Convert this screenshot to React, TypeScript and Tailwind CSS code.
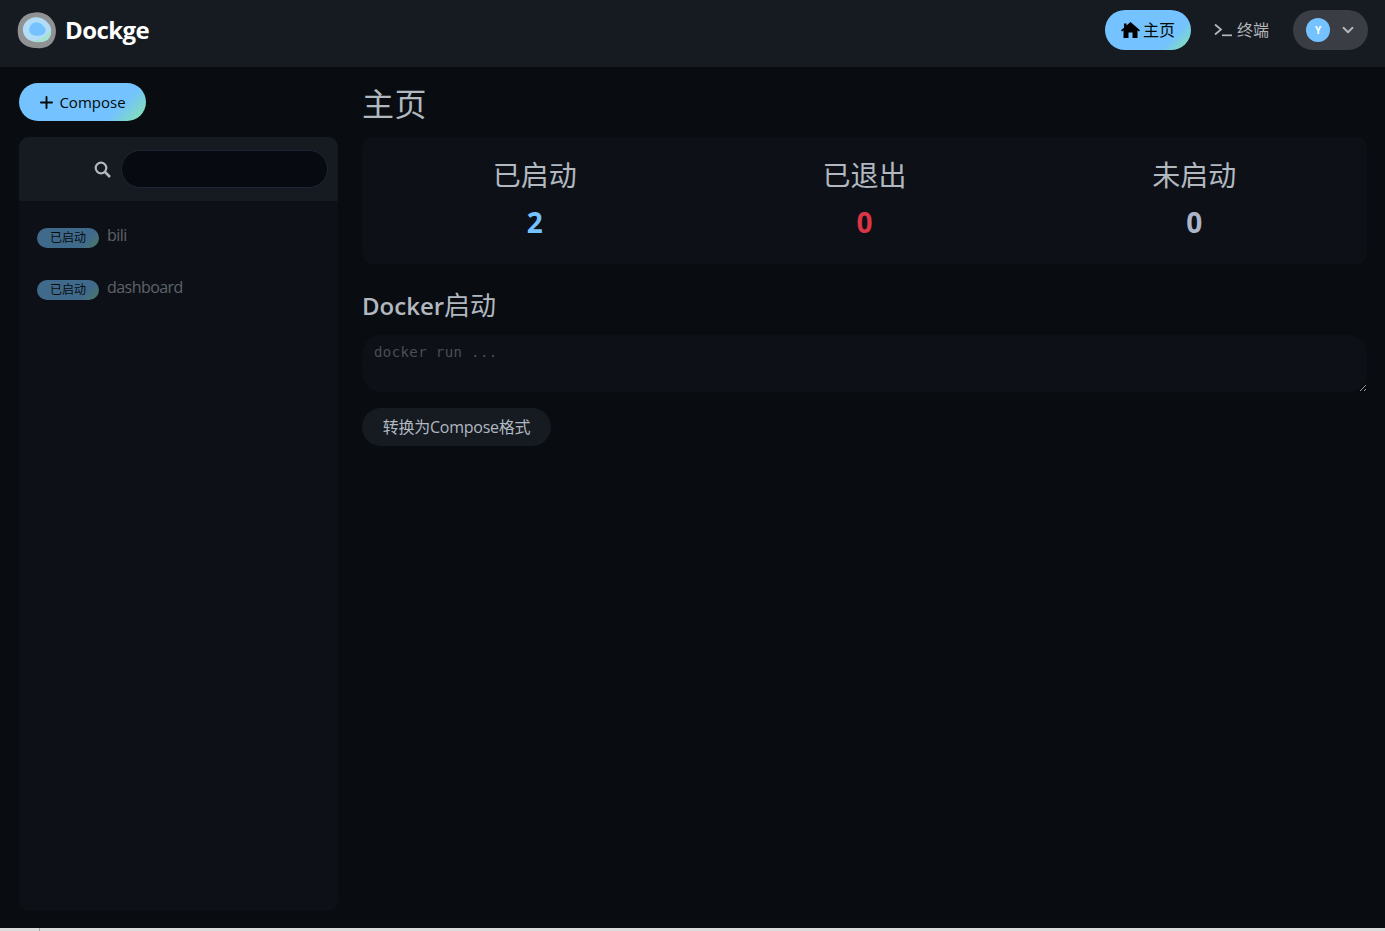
import { ChevronDown, Plus } from "lucide-react";

const font = "font-['Open_Sans','Noto_Sans_CJK_SC',sans-serif]";

const stats = [
  { label: "已启动", value: "2", color: "text-[#74c2ff]" },
  { label: "已退出", value: "0", color: "text-[#dc3545]" },
  { label: "未启动", value: "0", color: "text-[#adb5c9]" },
];

const stacks = ["bili", "dashboard"];

function Logo() {
  return (
    <svg width="40" height="37" viewBox="0 0 40 38" className="shrink-0">
      <path d="M18 0.5C26 -0.5 34 4 37.5 11C40.5 17.5 40 25 36 31C32 36.5 25 37.500 18 37C10 36.500 3.500 33 1 26C-1 18 0.500 10 6 5C9.500 2 13 0.800 18 0.500Z" fill="#8f9193" />
      <path d="M18 5.500C24.500 4.500 30.500 9 33.500 14.500C35.500 19 35 25 31 28.500C27 31.500 20 31.500 15 30C9.500 28.500 6 24.500 5.500 19C5 12 10.500 6.500 18 5.500Z" fill="#b3dcf6" />
      <path d="M33.800 18C34.800 23 33 27 29.500 29.300C25.500 31.500 19 31.300 14 29.600C20 29.600 27 27.500 33.800 18Z" fill="#a5e3d0" />
      <path d="M18.500 10.500C22.500 10 26 13 28.500 17C29.500 20 28 22.800 24.500 24C20.500 25 15.500 24.500 12.800 21.500C10.500 18 13 11.500 18.500 10.500Z" fill="#74c2ff" />
    </svg>
  );
}

function HomeIcon() {
  return (
    <svg width="19" height="16" viewBox="0 0 19 16" fill="#000" className="shrink-0">
      <path d="M9.500 0L19 8.300L17.900 9.500L16.500 8.300V16H11.500V10.500H7.500V16H2.500V8.300L1.100 9.500L0 8.300L3 5.700V1.500H5.500V3.500Z" />
    </svg>
  );
}

function TerminalIcon() {
  return (
    <svg width="18" height="14" viewBox="0 0 18 14" fill="none" stroke="#b4b7bb" strokeWidth="1.700" className="shrink-0">
      <path d="M1 1.500L7 6.500L1 11.500" />
      <path d="M8 12.300H18" />
    </svg>
  );
}

function SearchIcon() {
  return (
    <svg width="17" height="17" viewBox="0 0 17 17" fill="none" stroke="#b1b8c0" strokeWidth="2.200" className="mr-[10px] shrink-0">
      <circle cx="7" cy="7" r="5.300" />
      <path d="M11 11L16 16" strokeWidth="2.500" />
    </svg>
  );
}

export default function App() {
  return (
    <div className={`${font} flex h-[931px] flex-col overflow-hidden bg-[#090c10] text-[#b1b8c0]`}>
      <header className="flex h-[67px] shrink-0 items-center justify-between bg-[#161b22] pb-[7px] pl-[17px] pr-[17px]">
        <div className="flex items-center gap-[8px]">
          <Logo />
          <span className="text-[24px] font-bold tracking-[-0.6px] text-white">Dockge</span>
        </div>
        <nav className="flex items-center">
          <div className="flex h-[40px] w-[86px] items-center justify-center gap-[3px] rounded-full bg-[linear-gradient(135deg,#74c2ff_75%,#86e6a9)] text-[16px] text-[#020b05]">
            <HomeIcon />
            <span>主页</span>
          </div>
          <div className="ml-[23px] flex h-[40px] items-center gap-[5px] text-[16px] text-[#b4b7bb]">
            <TerminalIcon />
            <span>终端</span>
          </div>
          <div className="ml-[24px] flex h-[40px] w-[75px] items-center rounded-full bg-[#3a3d43] pl-[13px]">
            <div className="flex h-[24px] w-[24px] items-center justify-center rounded-full bg-[#74c2ff] text-[10px] font-bold text-white">Y</div>
            <ChevronDown size={18} strokeWidth={2.500} className="ml-[9px] text-[#b4b7bb]" />
          </div>
        </nav>
      </header>

      <main className="flex min-h-0 flex-1 gap-[24px] pl-[19px] pr-[18px] pt-[16px]">
        <aside className="flex w-[319px] shrink-0 flex-col pb-[17px]">
          <div className="flex h-[38px] w-[127px] items-center justify-center gap-[3px] rounded-full bg-[linear-gradient(135deg,#74c2ff_75%,#86e6a9)] pr-[2px] text-[15px] text-[#020b05]">
            <Plus size={19} strokeWidth={2.400} />
            <span>Compose</span>
          </div>
          <div className="mt-[16px] flex-1 overflow-hidden rounded-[10px] bg-[#0d1117]">
            <div className="flex h-[64px] items-center justify-end bg-[#161b22] pr-[10px]">
              <SearchIcon />
              <div className="h-[38px] w-[207px] rounded-full border border-[#1d2634] bg-[#070a10]" />
            </div>
            <div className="flex flex-col gap-[29px] pl-[18px] pt-[22px]">
              {stacks.map((name) => (
                <div key={name} className="flex h-[23px] items-center gap-[8px]">
                  <span className="mt-[7px] flex h-[20px] w-[62px] items-center justify-center rounded-full bg-[linear-gradient(135deg,#74c2ff_75%,#86e6a9)] text-[12px] text-[#020b05] opacity-50">
                    已启动
                  </span>
                  <span className="text-[16px] tracking-[-0.55px] text-[#5f6269]">{name}</span>
                </div>
              ))}
            </div>
          </div>
        </aside>

        <section className="min-w-0 flex-1">
          <h1 className="h-[38px] text-[32px] leading-[42px] tracking-[0.5px] text-[#b1b8c0]">主页</h1>
          <div className="mt-[16px] grid h-[127px] grid-cols-3 rounded-[10px] bg-[#0d1117] px-[8px] pt-[16px]">
            {stats.map((s) => (
              <div key={s.label} className="flex flex-col items-center">
                <div className="text-[28px] leading-[44px] text-[#b1b8c0]">{s.label}</div>
                <div className={`mt-[1px] text-[28px] font-bold leading-[48px] ${s.color}`}>{s.value}</div>
              </div>
            ))}
          </div>
          <h2 className="mt-[23px] h-[36px] text-[24px] font-semibold leading-[36px] text-[#b1b8c0]">
            Docker<span className="text-[26px] font-normal">启动</span>
          </h2>
          <textarea
            readOnly
            placeholder="docker run ..."
            className="mt-[12px] block h-[57px] w-full rounded-[19px] bg-[#0d1117] px-[12px] py-[7px] font-['DejaVu_Sans_Mono',monospace] text-[14px] leading-[21px] tracking-[0.4px] outline-none placeholder:text-[#4a4e55]"
          />
          <div className="mt-[16px] flex h-[38px] w-[189px] items-center justify-center rounded-full bg-[#161b22] text-[16px] tracking-[-0.25px] text-[#b1b8c0]">
            转换为Compose格式
          </div>
        </section>
      </main>

      <div className="flex h-[3px] shrink-0 bg-[#dcdcdc]">
        <div className="ml-[39px] w-px bg-[#a8a8a8]" />
      </div>
    </div>
  );
}
